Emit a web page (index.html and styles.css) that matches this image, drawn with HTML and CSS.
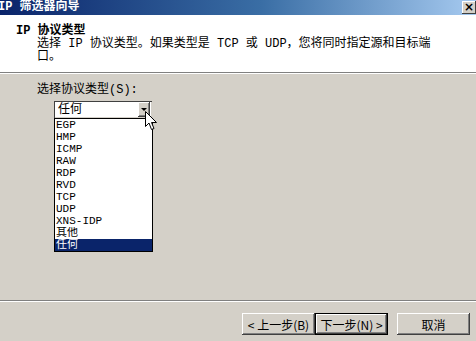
FILE: index.html
```html
<!DOCTYPE html>
<html lang="zh-CN">
<head>
    <meta charset="UTF-8">
    <title>IP 筛选器向导</title>
    <link rel="stylesheet" href="styles.css">
</head>
<body>
    <div class="wizard">
        <!-- Title bar -->
        <div class="titlebar">
            <span class="title">IP 筛选器向导</span>
            <span class="close">×</span>
        </div>

        <!-- Page header -->
        <div class="header">
            <div class="heading">IP 协议类型</div>
            <div class="desc">选择 IP 协议类型。如果类型是 TCP 或 UDP，您将同时指定源和目标端<br>口。</div>
        </div>

        <!-- Page body -->
        <div class="content">
            <div class="label">选择协议类型(<u>S</u>):</div>
            <div class="combo">
                <span class="combo-value">任何</span>
                <span class="combo-btn"><span class="arrow"></span></span>
            </div>
            <ul class="dropdown">
                <li>EGP</li>
                <li>HMP</li>
                <li>ICMP</li>
                <li>RAW</li>
                <li>RDP</li>
                <li>RVD</li>
                <li>TCP</li>
                <li>UDP</li>
                <li>XNS-IDP</li>
                <li class="cjk">其他</li>
                <li class="cjk selected">任何</li>
            </ul>
            <svg class="cursor" width="13" height="20" viewBox="0 0 13 20">
                <path d="M0.5 0.5 L0.5 15.5 L4 12 L6.5 18.5 L9 17.5 L6.5 11.5 L11.5 11.5 Z" fill="#fff" stroke="#000" stroke-width="1"/>
            </svg>
        </div>

        <!-- Buttons -->
        <div class="footer">
            <button class="btn">&lt; 上一步(<u>B</u>)</button>
            <button class="btn default">下一步(<u>N</u>) &gt;</button>
            <button class="btn cancel">取消</button>
        </div>
    </div>
</body>
</html>
```

FILE: styles.css
```css
body {
    margin: 0;
    background-color: #d4d0c8;
    font-family: "Liberation Mono", "Noto Sans CJK SC", monospace;
    font-size: 12px;
    color: #000;
    overflow: hidden;
}
.wizard {
    width: 476px;
    height: 341px;
    position: relative;
}
.titlebar {
    height: 15px;
    display: flex;
    align-items: center;
    justify-content: space-between;
    background: linear-gradient(to right, #0a246a 0%, #3a6ea5 55%, #a6caf0 100%);
}
.title {
    color: #fff;
    font-weight: bold;
    margin-left: -2px;
    line-height: 15px;
}
.close {
    width: 14px;
    height: 13px;
    background-color: #d4d0c8;
    box-shadow: inset -1px -1px #404040, inset 1px 1px #fff;
    font-family: "DejaVu Sans", sans-serif;
    font-weight: bold;
    font-size: 12px;
    line-height: 12px;
    text-align: center;
}
.header {
    height: 48px;
    padding: 9px 0 0 16px;
    background-color: #fff;
    border-bottom: 1px solid #808080;
    box-shadow: 0 1px #fff;
}
.heading {
    font-weight: bold;
    line-height: 14px;
}
.desc {
    margin-left: 21px;
    line-height: 13px;
    white-space: nowrap;
}
.content {
    height: 216px;
    padding: 10px 0 0 37px;
    margin-top: 1px;
}
.label {
    line-height: 13px;
}
.label u {
    text-decoration: none;
}
.combo {
    width: 95px;
    height: 15px;
    margin: 4px 0 0 17px;
    padding: 1px 2px 1px 1px;
    display: flex;
    justify-content: space-between;
    background-color: #fff;
    box-shadow: inset 1px 1px #404040, inset -1px -1px #d4d0c8;
}
.combo-value {
    padding-left: 3px;
    line-height: 16px;
}
.combo-btn {
    width: 12px;
    height: 15px;
    background-color: #d4d0c8;
    box-shadow: inset -1px -1px #404040, inset 1px 1px #fff, inset -2px -2px #808080;
    display: flex;
    align-items: center;
    justify-content: center;
}
.arrow {
    width: 0;
    height: 0;
    border-left: 3px solid transparent;
    border-right: 3px solid transparent;
    border-top: 3px solid #000;
}
.dropdown {
    list-style: none;
    width: 97px;
    margin: 0 0 0 17px;
    padding: 0;
    background-color: #fff;
    border: 1px solid #000;
}
.dropdown li {
    height: 12px;
    line-height: 12px;
    padding-left: 1px;
    font-size: 11px;
    overflow: hidden;
}
.dropdown li.selected {
    background-color: #0a246a;
    color: #fff;
}
.cursor {
    position: absolute;
    left: 145px;
    top: 111px;
}
.footer {
    border-top: 1px solid #808080;
    box-shadow: inset 0 1px #fff;
    padding: 12px 6px 0 0;
    display: flex;
    justify-content: flex-end;
}
.btn {
    width: 73px;
    height: 22px;
    padding: 0;
    border: none;
    background-color: #d4d0c8;
    font-family: "Noto Sans CJK SC", sans-serif;
    font-size: 12px;
    color: #000;
    box-shadow: inset -1px -1px #404040, inset 1px 1px #fff, inset -2px -2px #808080;
}
.btn u {
    text-decoration: none;
}
.btn.default {
    box-shadow: inset 0 0 0 1px #000, inset -2px -2px #404040, inset 2px 2px #fff, inset -3px -3px #808080;
}
.btn.cancel {
    margin-left: 9px;
}
```
